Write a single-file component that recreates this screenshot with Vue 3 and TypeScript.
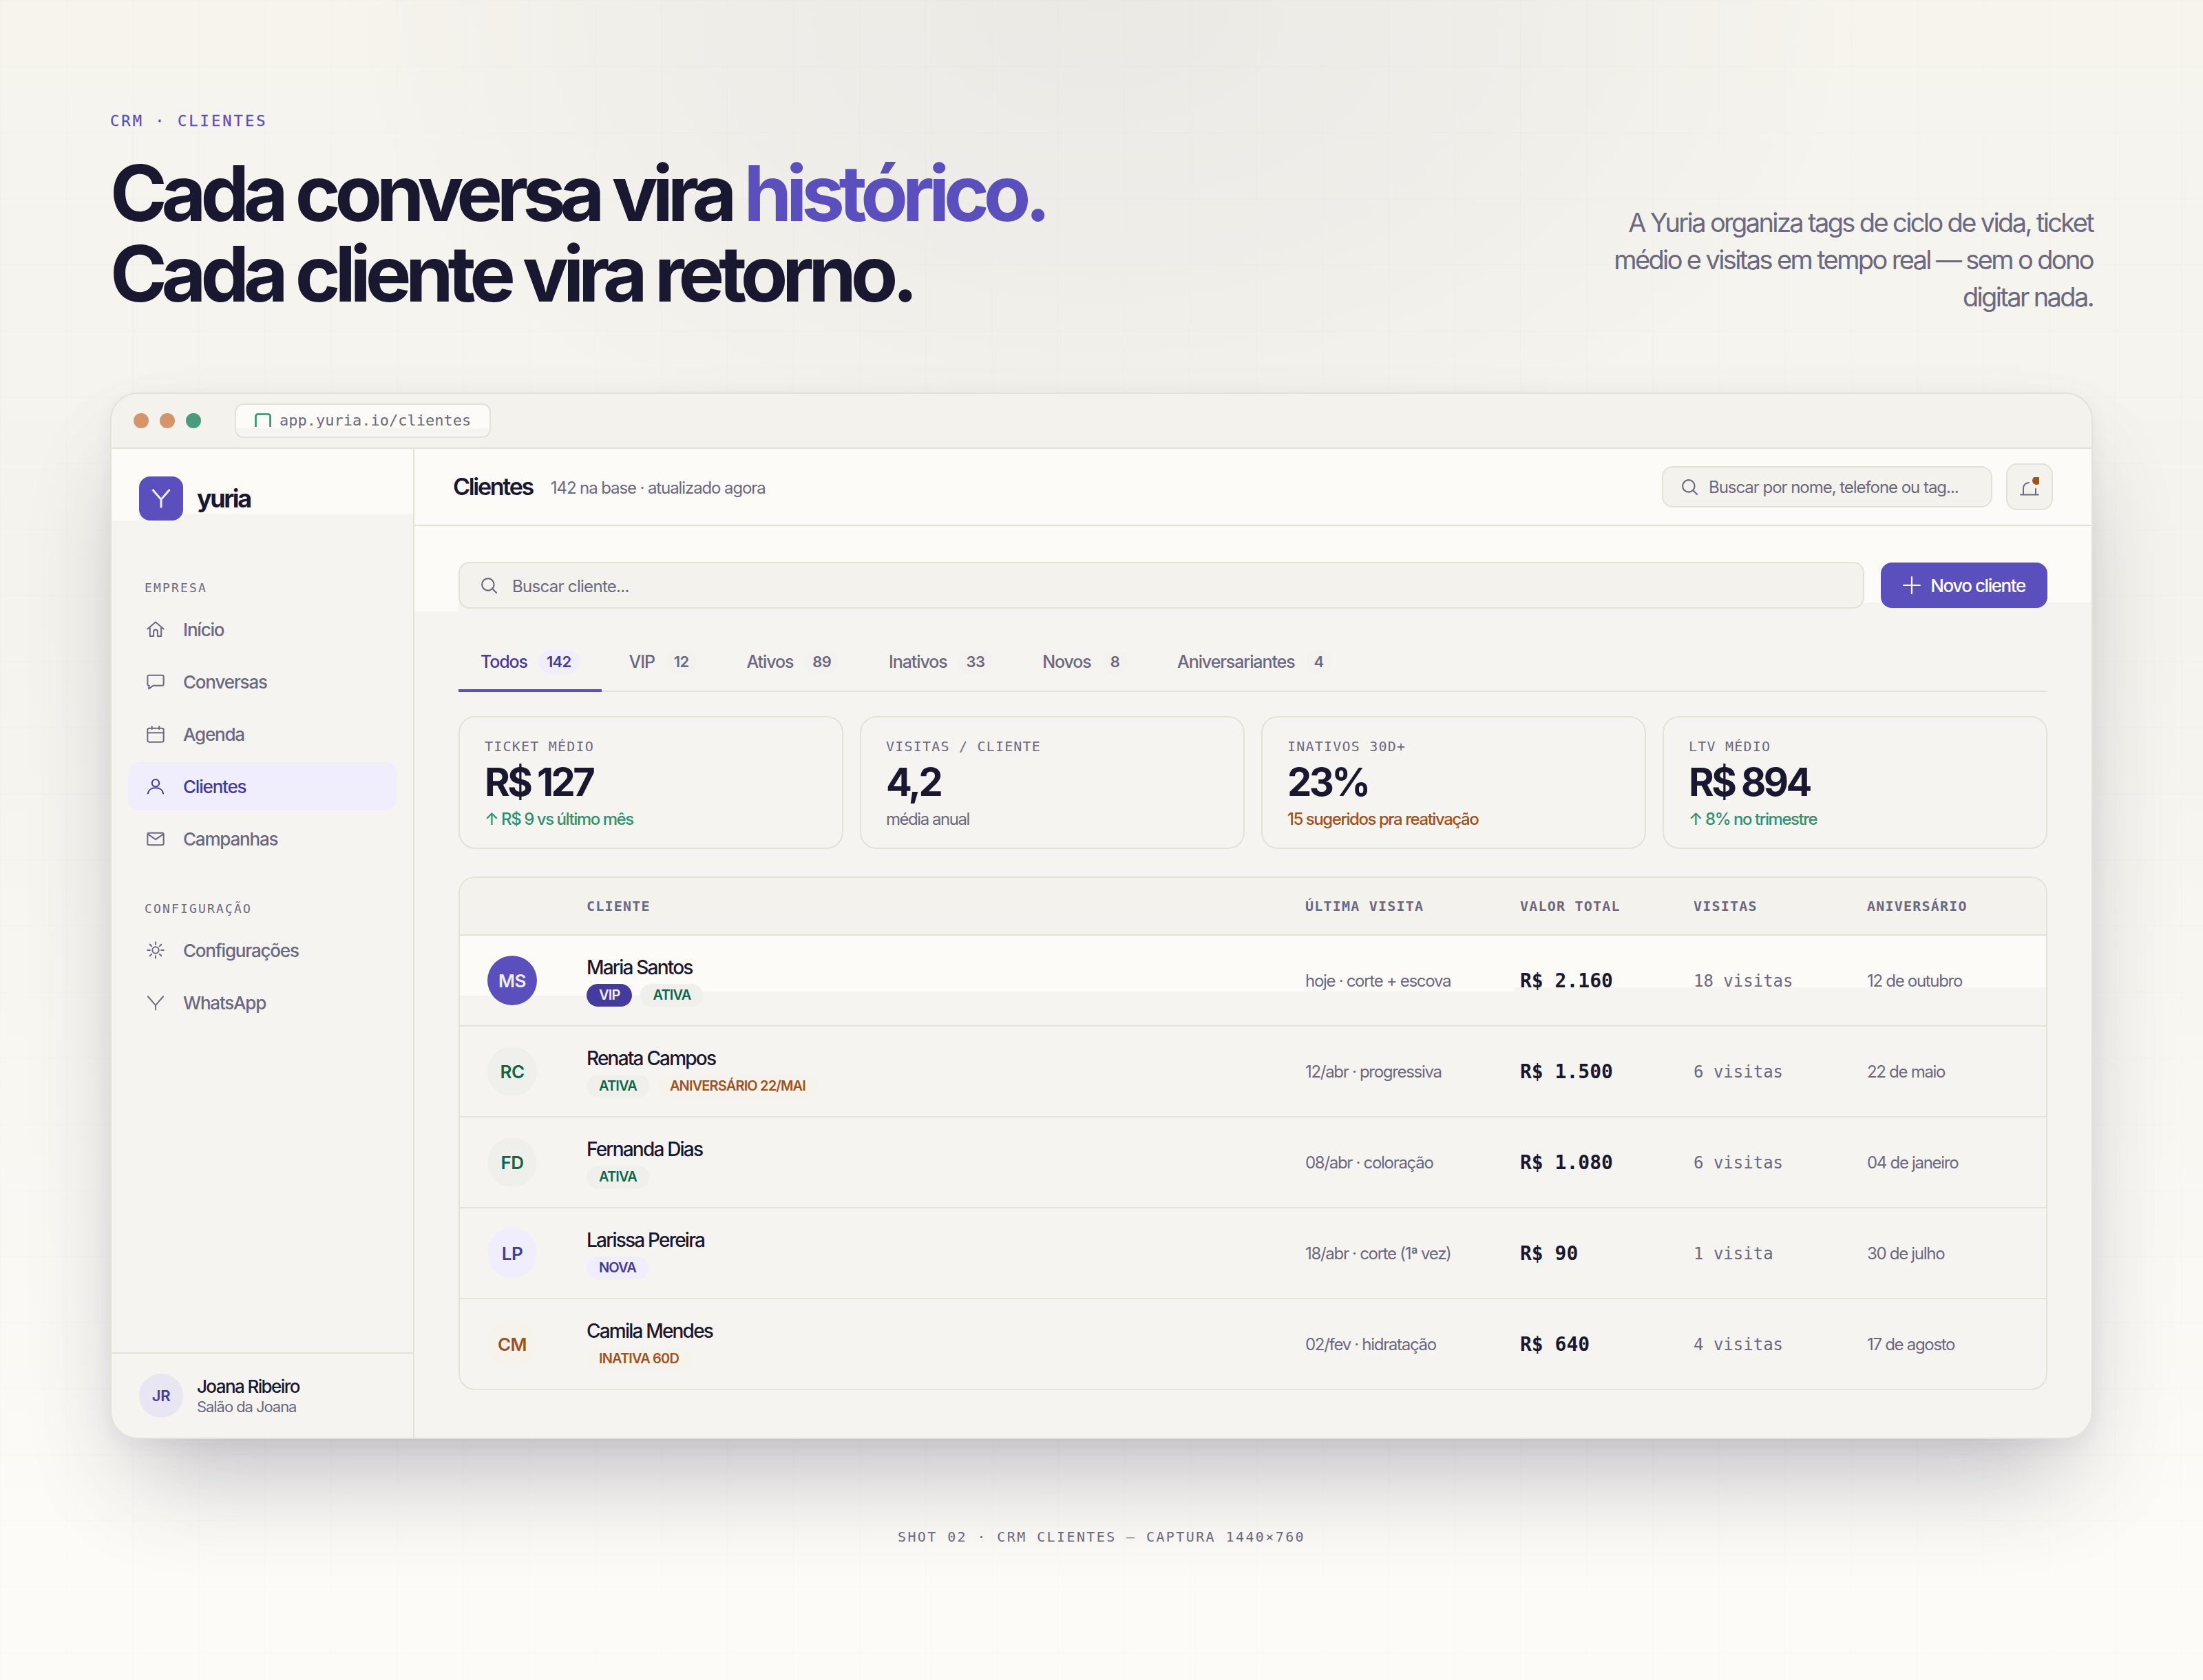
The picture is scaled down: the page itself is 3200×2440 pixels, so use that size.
<script setup lang="ts">
interface NavItem { label: string; icon: string; active?: boolean }
interface Tag { text: string; kind: string }
interface Row { ini: string; kind: string; name: string; tags: Tag[]; last: string; value: string; visits: string; bday: string; hi?: boolean }

const navMain: NavItem[] = [
  { label: 'Início', icon: 'home' },
  { label: 'Conversas', icon: 'chat' },
  { label: 'Agenda', icon: 'cal' },
  { label: 'Clientes', icon: 'user', active: true },
  { label: 'Campanhas', icon: 'mail' },
]
const navCfg: NavItem[] = [
  { label: 'Configurações', icon: 'sun' },
  { label: 'WhatsApp', icon: 'wa' },
]
const tabs = [
  { label: 'Todos', n: '142', active: true },
  { label: 'VIP', n: '12' },
  { label: 'Ativos', n: '89' },
  { label: 'Inativos', n: '33' },
  { label: 'Novos', n: '8' },
  { label: 'Aniversariantes', n: '4' },
]
const stats = [
  { label: 'TICKET MÉDIO', value: 'R$ 127', sub: '↑ R$ 9 vs último mês', tone: 'up' },
  { label: 'VISITAS / CLIENTE', value: '4,2', sub: 'média anual', tone: 'muted' },
  { label: 'INATIVOS 30D+', value: '23%', sub: '15 sugeridos pra reativação', tone: 'warn' },
  { label: 'LTV MÉDIO', value: 'R$ 894', sub: '↑ 8% no trimestre', tone: 'up' },
]
const cols = ['', 'CLIENTE', 'ÚLTIMA VISITA', 'VALOR TOTAL', 'VISITAS', 'ANIVERSÁRIO']
const rows: Row[] = [
  { ini: 'MS', kind: 'vip', name: 'Maria Santos', tags: [{ text: 'VIP', kind: 'vip' }, { text: 'ATIVA', kind: 'green' }], last: 'hoje · corte + escova', value: 'R$ 2.160', visits: '18 visitas', bday: '12 de outubro', hi: true },
  { ini: 'RC', kind: 'green', name: 'Renata Campos', tags: [{ text: 'ATIVA', kind: 'green' }, { text: 'ANIVERSÁRIO 22/MAI', kind: 'orange' }], last: '12/abr · progressiva', value: 'R$ 1.500', visits: '6 visitas', bday: '22 de maio' },
  { ini: 'FD', kind: 'green', name: 'Fernanda Dias', tags: [{ text: 'ATIVA', kind: 'green' }], last: '08/abr · coloração', value: 'R$ 1.080', visits: '6 visitas', bday: '04 de janeiro' },
  { ini: 'LP', kind: 'lilac', name: 'Larissa Pereira', tags: [{ text: 'NOVA', kind: 'lilac' }], last: '18/abr · corte (1ª vez)', value: 'R$ 90', visits: '1 visita', bday: '30 de julho' },
  { ini: 'CM', kind: 'orange', name: 'Camila Mendes', tags: [{ text: 'INATIVA 60D', kind: 'orange' }], last: '02/fev · hidratação', value: 'R$ 640', visits: '4 visitas', bday: '17 de agosto' },
]
const rays = [0, 45, 90, 135, 180, 225, 270, 315]
</script>

<template>
  <div class="page">
    <header class="head">
      <div class="head-left">
        <div class="eyebrow">CRM · CLIENTES</div>
        <h1 class="title">Cada conversa vira <span class="accent">histórico.</span><br />Cada cliente vira retorno.</h1>
      </div>
      <p class="lede">A Yuria organiza tags de ciclo de vida, ticket médio e visitas em tempo real — sem o dono digitar nada.</p>
    </header>

    <section class="window">
      <div class="chrome">
        <span class="dot orange"></span>
        <span class="dot orange"></span>
        <span class="dot green"></span>
        <div class="url">
          <svg class="lock" viewBox="0 0 24 20" width="24" height="20" fill="none"><path d="M1.500 20V4.500a3 3 0 0 1 3-3h15a3 3 0 0 1 3 3V20" stroke="#2f9170" stroke-width="2.6" /></svg>
          <span>app.yuria.io/clientes</span>
        </div>
      </div>

      <div class="body">
        <aside class="side">
          <div class="brand">
            <span class="logo">
              <svg viewBox="0 0 28 28" width="28" height="28" fill="none"><path d="M1.500 1 14 15.500 26.500 1M14 15.500V27.500" stroke="#f0eefd" stroke-width="3" /></svg>
            </span>
            <span class="brand-name">yuria</span>
          </div>

          <div class="sec-label">EMPRESA</div>
          <nav class="nav">
            <a v-for="n in navMain" :key="n.label" class="nav-item" :class="{ active: n.active }">
              <svg class="nav-ic" viewBox="0 0 24 24" fill="none" stroke="currentColor" stroke-width="1.7" stroke-linejoin="round" stroke-linecap="round">
                <template v-if="n.icon === 'home'"><path d="M2 11.500 12 3l10 8.500M5 10v10.500h4.500V15a2.500 2.500 0 0 1 5 0v5.500H19V10" /></template>
                <template v-else-if="n.icon === 'chat'"><path d="M4 4h16a2 2 0 0 1 2 2v9a2 2 0 0 1-2 2H9l-5.500 4 .5-4a2 2 0 0 1-2-2V6a2 2 0 0 1 2-2Z" /></template>
                <template v-else-if="n.icon === 'cal'"><rect x="2" y="5" width="20" height="17" rx="2" /><path d="M2 10.500h20M7.500 2.500V6M16.500 2.500V6" /></template>
                <template v-else-if="n.icon === 'user'"><circle cx="12" cy="8" r="4.500" /><path d="M2.500 21c.5-4.500 4.500-7 9.500-7s9 2.500 9.500 7" /></template>
                <template v-else><rect x="2" y="5" width="20" height="15" rx="2" /><path d="m2.500 6.500 9.500 6.500 9.500-6.500" /></template>
              </svg>
              <span>{{ n.label }}</span>
            </a>
          </nav>

          <div class="sec-label second">CONFIGURAÇÃO</div>
          <nav class="nav">
            <a v-for="n in navCfg" :key="n.label" class="nav-item">
              <svg class="nav-ic" viewBox="0 0 24 24" fill="none" stroke="currentColor" stroke-width="1.7" stroke-linecap="round">
                <template v-if="n.icon === 'sun'">
                  <circle cx="12" cy="12" r="4" />
                  <path v-for="r in rays" :key="r" d="M12 2v3" :transform="`rotate(${r} 12 12)`" />
                </template>
                <template v-else><path d="M2.500 4.500 12 15.500l9.500-11M12 15.500V21" /></template>
              </svg>
              <span>{{ n.label }}</span>
            </a>
          </nav>

          <div class="side-foot">
            <span class="foot-av">JR</span>
            <div class="foot-txt">
              <div class="foot-name">Joana Ribeiro</div>
              <div class="foot-sub">Salão da Joana</div>
            </div>
          </div>
        </aside>

        <main class="main">
          <div class="topbar">
            <div class="top-title"><span class="h2">Clientes</span><span class="h2-sub">142 na base · atualizado agora</span></div>
            <div class="top-search">
              <svg viewBox="0 0 24 24" width="28" height="28" fill="none" stroke="currentColor" stroke-width="1.8" stroke-linecap="round"><circle cx="11" cy="11" r="7.500" /><path d="m16.500 16.500 5 5" /></svg>
              <span>Buscar por nome, telefone ou tag...</span>
            </div>
            <button class="bell" type="button">
              <svg viewBox="0 0 28 28" width="28" height="28" fill="none" stroke="#6b6880" stroke-width="2" stroke-linecap="round"><path d="M5 25V17C5 12 8 8.500 13 8M23 17v8M1 25.500h26" /><circle cx="24" cy="5" r="6" fill="#a0521a" stroke="none" /></svg>
            </button>
          </div>

          <div class="content">
            <div class="toolbar">
              <div class="search">
                <svg viewBox="0 0 24 24" width="28" height="28" fill="none" stroke="currentColor" stroke-width="1.8" stroke-linecap="round"><circle cx="11" cy="11" r="7.500" /><path d="m16.500 16.500 5 5" /></svg>
                <span class="lift">Buscar cliente...</span>
              </div>
              <button class="new" type="button">
                <svg viewBox="0 0 24 24" width="26" height="26" fill="none" stroke="#fff" stroke-width="2" stroke-linecap="round"><path d="M12 1v22M1 12h22" /></svg>
                <span class="lift">Novo cliente</span>
              </button>
            </div>

            <div class="tabs">
              <div v-for="t in tabs" :key="t.label" class="tab" :class="{ active: t.active }">
                <span>{{ t.label }}</span><span class="badge">{{ t.n }}</span>
              </div>
            </div>

            <div class="stats">
              <div v-for="s in stats" :key="s.label" class="stat">
                <div class="stat-label">{{ s.label }}</div>
                <div class="stat-value">{{ s.value }}</div>
                <div class="stat-sub" :class="s.tone">{{ s.sub }}</div>
              </div>
            </div>

            <div class="table">
              <div class="tr th">
                <div v-for="c in cols" :key="c">{{ c }}</div>
              </div>
              <div v-for="r in rows" :key="r.ini" class="tr row" :class="{ hi: r.hi }">
                <div><span class="av" :class="r.kind">{{ r.ini }}</span></div>
                <div class="who">
                  <div class="name">{{ r.name }}</div>
                  <div class="tags"><span v-for="t in r.tags" :key="t.text" class="tag" :class="t.kind">{{ t.text }}</span></div>
                </div>
                <div class="cell">{{ r.last }}</div>
                <div class="val">{{ r.value }}</div>
                <div class="vis">{{ r.visits }}</div>
                <div class="cell">{{ r.bday }}</div>
              </div>
            </div>
          </div>
        </main>
      </div>
    </section>

    <footer class="foot">SHOT 02 · CRM CLIENTES — CAPTURA 1440×760</footer>
  </div>
</template>

<style>
html, body { margin: 0; padding: 0; background: #fcfbf7; }
</style>

<style scoped>
.page {
  --ink: #1a1730;
  --muted: #6b6880;
  --accent: #5b4fbe;
  --accent-dk: #453a9e;
  --line: #e5e1d6;
  --mono: "DejaVu Sans Mono", monospace;
  box-sizing: border-box;
  width: 3200px;
  height: 2440px;
  padding: 155px 160px 0;
  overflow: hidden;
  font-family: Inter, "Noto Sans", sans-serif;
  color: var(--ink);
  background:
    linear-gradient(rgba(26, 23, 48, .008) 2px, transparent 2px) 0 0 / 96px 96px,
    linear-gradient(90deg, rgba(26, 23, 48, .008) 2px, transparent 2px) 0 0 / 96px 96px,
    radial-gradient(ellipse 1120px 720px at 1600px 0, rgba(100, 105, 125, .08), rgba(100, 105, 125, .042) 55%, transparent 100%),
    linear-gradient(180deg, #f6f4ed 0, #f5f3ed 900px, #fcfbf7 2300px);
}
.head { display: flex; justify-content: space-between; align-items: flex-end; height: 301px; }
.eyebrow { font: 400 22px/30px var(--mono); letter-spacing: 3.08px; color: var(--accent); -webkit-text-stroke: .3px var(--accent); }
.title {
  margin: 31px 0 0;
  font-size: 112px;
  line-height: 117px;
  font-weight: 700;
  letter-spacing: -8.25px;
}
.accent { color: var(--accent); }
.lede {
  margin: 0 0 -2px;
  width: 700px;
  text-align: right;
  font-size: 38px;
  line-height: 54px;
  letter-spacing: -2.63px;
  color: var(--muted);
}

.window {
  margin-top: 114px;
  height: 1520px;
  box-sizing: border-box;
  border: 2px solid var(--line);
  border-radius: 40px;
  overflow: hidden;
  background: #f5f4f0;
  display: flex;
  flex-direction: column;
  box-shadow: 0 80px 140px -40px rgba(40, 38, 70, .3), 0 8px 30px rgba(40, 38, 70, .05);
}
.chrome {
  height: 78px;
  flex: none;
  display: flex;
  align-items: center;
  padding: 0 32px;
  background: #f3f2ed;
  border-bottom: 2px solid var(--line);
}
.dot { width: 22px; height: 22px; border-radius: 50%; margin-right: 16px; }
.dot.orange { background: #d4956b; }
.dot.green { background: #4a9a80; margin-right: 49px; }
.url {
  box-sizing: border-box;
  width: 372px;
  height: 50px;
  display: flex;
  align-items: center;
  gap: 12px;
  padding-left: 27px;
  border: 2px solid var(--line);
  border-radius: 12px;
  background: linear-gradient(#fcfbf7 0 34px, #f5f4f0 34px);
  font: 400 22px/1 var(--mono);
  color: var(--muted);
}
.lock { margin-top: -2px; flex: none; }

.body { flex: 1; display: flex; min-height: 0; }
.side {
  box-sizing: border-box;
  width: 440px;
  flex: none;
  display: flex;
  flex-direction: column;
  padding: 40px 24px 0;
  border-right: 2px solid var(--line);
  background:
    linear-gradient(#fcfbf7 0 0) 0 0 / 40px 104px no-repeat,
    linear-gradient(#fcfbf7 0 0) 0 0 / 100% 94px no-repeat;
}
.brand { display: flex; align-items: center; gap: 20px; padding-left: 16px; }
.logo { width: 64px; height: 64px; border-radius: 16px; background: var(--accent); display: flex; align-items: center; justify-content: center; }
.brand-name { font-size: 36px; font-weight: 700; letter-spacing: -2.4px; }
.sec-label { font: 400 18px/22px var(--mono); letter-spacing: 2.16px; color: var(--muted); padding-left: 24px; margin-top: 87px; }
.sec-label.second { margin-top: 56px; }
.nav { display: flex; flex-direction: column; gap: 6px; margin-top: 14px; }
.nav-item {
  height: 70px;
  display: flex;
  align-items: center;
  gap: 26px;
  padding-left: 26px;
  border-radius: 16px;
  font-size: 26px;
  font-weight: 500;
  letter-spacing: -1.2px;
  color: var(--muted);
}
.nav-item.active { background: #f0eefd; color: var(--accent-dk); }
.nav-ic { width: 28px; height: 28px; flex: none; }
.side-foot {
  margin: auto -24px 0;
  height: 122px;
  flex: none;
  display: flex;
  align-items: center;
  gap: 20px;
  padding: 0 40px;
  border-top: 2px solid var(--line);
}
.foot-av { width: 64px; height: 64px; border-radius: 50%; background: #e8e6f2; color: var(--accent-dk); font-size: 22px; font-weight: 600; display: flex; align-items: center; justify-content: center; letter-spacing: -.4px; }
.foot-txt { padding-top: 2px; }
.foot-name { font-size: 26px; line-height: 30px; font-weight: 500; letter-spacing: -1.6px; }
.foot-sub { font-size: 22px; line-height: 28px; color: var(--muted); letter-spacing: -1.06px; }

.main { flex: 1; min-width: 0; display: flex; flex-direction: column; }
.topbar {
  height: 110px;
  flex: none;
  display: flex;
  align-items: center;
  padding: 0 56px;
  border-bottom: 2px solid var(--line);
  background: #fcfbf7;
}
.top-title { flex: 1; display: flex; align-items: center; gap: 26px; }
.h2 { font-size: 34px; font-weight: 600; letter-spacing: -2.3px; margin-top: -2px; }
.h2-sub { font-size: 24px; letter-spacing: -1.1px; color: var(--muted); margin-top: 2px; }
.top-search {
  box-sizing: border-box;
  width: 480px;
  height: 60px;
  display: flex;
  align-items: center;
  gap: 14px;
  padding-left: 24px;
  margin-right: 20px;
  border: 2px solid var(--line);
  border-radius: 16px;
  background: #f3f2ed;
  color: var(--muted);
  font-size: 24px;
  letter-spacing: -1.04px;
}
.bell {
  box-sizing: border-box;
  width: 68px;
  height: 68px;
  padding: 0;
  display: flex;
  align-items: center;
  justify-content: center;
  border: 2px solid var(--line);
  border-radius: 16px;
  background: #f3f2ed;
}

.content {
  flex: 1;
  padding: 52px 64px 0;
  background:
    linear-gradient(#fcfbf7 0 0) 0 0 / 64px 124px no-repeat,
    linear-gradient(#fcfbf7 0 0) 0 0 / 100% 111px no-repeat;
}
.toolbar { display: flex; gap: 24px; align-items: center; }
.lift { padding-top: 2px; }
.search {
  box-sizing: border-box;
  flex: 1;
  height: 68px;
  display: flex;
  align-items: center;
  gap: 20px;
  padding-left: 28px;
  border: 2px solid var(--line);
  border-radius: 16px;
  background: #f3f2ed;
  color: var(--muted);
  font-size: 24px;
  letter-spacing: -.7px;
}
.new {
  width: 242px;
  height: 66px;
  display: flex;
  align-items: center;
  justify-content: center;
  gap: 14px;
  padding: 0;
  border: 0;
  border-radius: 16px;
  background: var(--accent);
  color: #fff;
  font: 500 26px/1 Inter, sans-serif;
  letter-spacing: -1.45px;
}

.tabs { display: flex; gap: 8px; margin-top: 33px; border-bottom: 2px solid var(--line); height: 86px; }
.tab {
  box-sizing: border-box;
  display: flex;
  align-items: center;
  gap: 16px;
  padding: 2px 32px 0;
  height: 86px;
  font-size: 25px;
  font-weight: 500;
  letter-spacing: -1.1px;
  color: var(--muted);
}
.tab.active { color: var(--accent-dk); box-shadow: inset 0 -4px 0 var(--accent); height: 88px; padding-bottom: 2px; }
.badge {
  height: 34px;
  padding: 0 12px;
  display: flex;
  align-items: center;
  border-radius: 17px;
  background: #f3f2ee;
  font: 600 22px/1 Inter, sans-serif;
  letter-spacing: -.7px;
}
.tab.active .badge { background: #f0eefd; }

.stats { display: grid; grid-template-columns: repeat(4, 1fr); gap: 24px; margin-top: 35px; }
.stat {
  box-sizing: border-box;
  height: 193px;
  padding: 30px 36px 0;
  border: 2px solid var(--line);
  border-radius: 24px;
}
.stat-label { font: 400 20px/24px var(--mono); letter-spacing: 1.2px; color: var(--muted); }
.stat-value { font-size: 56px; line-height: 68px; margin-top: 6px; font-weight: 700; letter-spacing: -3.6px; }
.stat-sub { font-size: 24px; line-height: 30px; margin-top: 5px; letter-spacing: -1.45px; font-weight: 500; }
.stat-sub.up { color: #2f9170; }
.stat-sub.warn { color: #a0521a; }
.stat-sub.muted { color: var(--muted); font-weight: 400; }

.table { margin-top: 40px; border: 2px solid var(--line); border-radius: 24px; overflow: hidden; }
.tr {
  display: grid;
  grid-template-columns: 144px 1fr 312px 252px 252px 220px;
  align-items: center;
  padding: 0 40px;
  box-sizing: border-box;
  border-bottom: 2px solid var(--line);
}
.tr:last-child { border-bottom: 0; }
.th { height: 84px; background: #f3f2ed; font: 700 20px/1 var(--mono); letter-spacing: 1.2px; color: var(--muted); }
.row { height: 132px; }
.row:last-child { height: 130px; }
.row.hi {
  background:
    linear-gradient(#fcfbf7 0 0) 0 0 / 352px 87px no-repeat,
    linear-gradient(#fcfbf7 0 0) 0 0 / 1532px 81px no-repeat,
    linear-gradient(#fcfbf7 0 0) 0 0 / 100% 75px no-repeat;
}
.av {
  width: 72px;
  height: 72px;
  border-radius: 50%;
  display: flex;
  align-items: center;
  justify-content: center;
  font-size: 26px;
  font-weight: 600;
  letter-spacing: -.5px;
}
.av.vip { background: var(--accent); color: #f0eefd; }
.av.green { background: #efefec; color: #0f6647; }
.av.lilac { background: #f0eefd; color: var(--accent-dk); }
.av.orange { background: #f6f3ec; color: #a0521a; }
.name { font-size: 28px; line-height: 36px; font-weight: 500; letter-spacing: -1.8px; }
.tags { display: flex; gap: 12px; margin-top: 6px; }
.tag {
  height: 33px;
  padding: 0 18px;
  display: flex;
  align-items: center;
  border-radius: 17px;
  font-size: 20px;
  font-weight: 600;
  letter-spacing: -.85px;
}
.tag.vip { background: var(--accent-dk); color: #f0eefd; }
.tag.green { background: #efefec; color: #0f6647; }
.tag.lilac { background: #f0eefd; color: var(--accent-dk); }
.tag.orange { background: #f6f3ec; color: #a0521a; }
.cell { font-size: 24px; letter-spacing: -1.3px; color: var(--muted); }
.val { font: 700 28px/1 var(--mono); padding-top: 1px; }
.vis { font: 400 24px/1 var(--mono); color: var(--muted); padding-top: 1px; }

.foot {
  margin-top: 128px;
  text-align: center;
  font: 400 20px/28px var(--mono);
  letter-spacing: 2.4px;
  color: var(--muted);
}
</style>
